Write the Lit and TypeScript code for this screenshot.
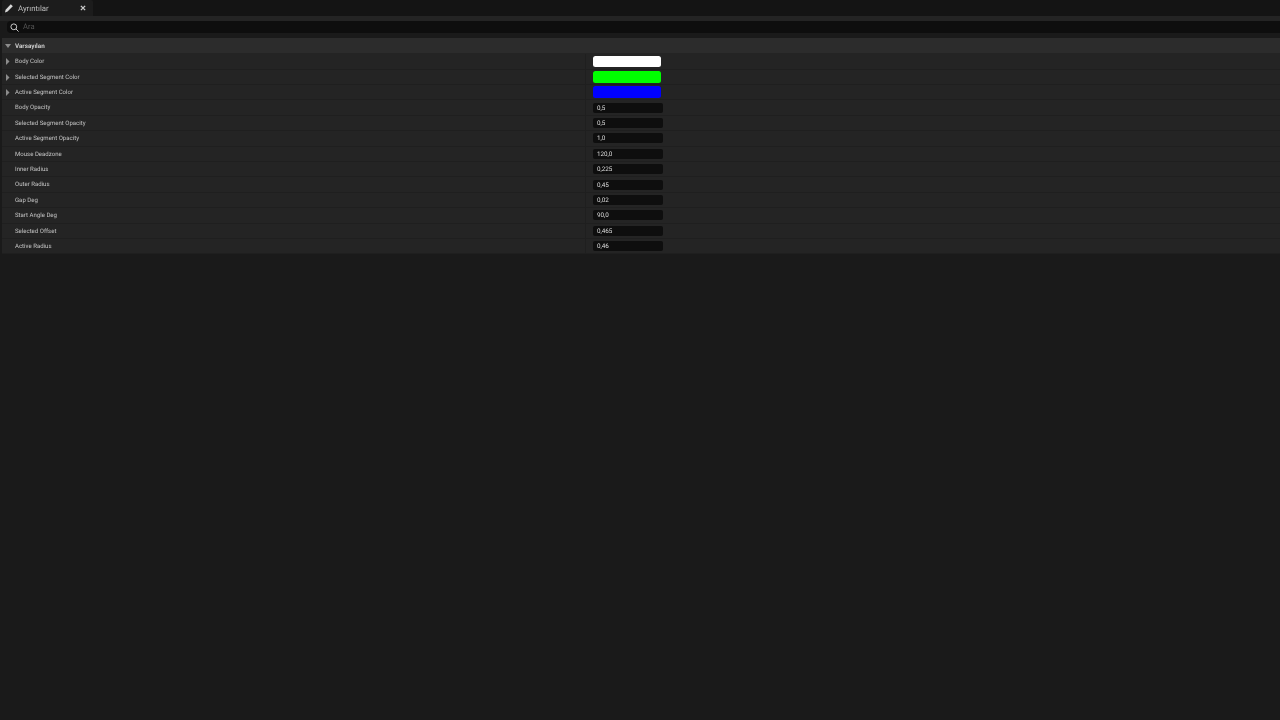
import { LitElement, html, css } from "lit";
import { customElement } from "lit/decorators.js";

type Row = { label: string; color?: string; value?: string };
const rows: Row[] = [
  { label: "Body Color", color: "#ffffff" },
  { label: "Selected Segment Color", color: "#00ff00" },
  { label: "Active Segment Color", color: "#0000ff" },
  { label: "Body Opacity", value: "0,5" },
  { label: "Selected Segment Opacity", value: "0,5" },
  { label: "Active Segment Opacity", value: "1,0" },
  { label: "Mouse Deadzone", value: "120,0" },
  { label: "Inner Radius", value: "0,225" },
  { label: "Outer Radius", value: "0,45" },
  { label: "Gap Deg", value: "0,02" },
  { label: "Start Angle Deg", value: "90,0" },
  { label: "Selected Offset", value: "0,465" },
  { label: "Active Radius", value: "0,46" },
];

@customElement("app-root")
export class AppRoot extends LitElement {
  static styles = css`
    :host { display: block; width: 1280px; height: 720px; overflow: hidden; background: #1a1a1a; }
    .page { display: flex; flex-direction: column; width: 1280px; height: 720px; background: #1a1a1a; font-family: Roboto, "Liberation Sans", sans-serif; color: #c0c0c0; text-rendering: geometricPrecision; filter: blur(0.3px); }
    .tabbar { display: flex; height: 16px; background: #141414; flex: none; }
    .tab { display: flex; align-items: center; width: 91px; margin-left: 2px; background: #1c1c1c; border-radius: 2px 2px 0 0; box-sizing: border-box; padding-left: 2px; }
    .tab svg { width: 10px; height: 10px; flex: none; }
    .tabtitle { font-size: 7.8px; margin-left: 4px; color: #bdbdbd; flex: 1; }
    .close { width: 8px; height: 8px; margin-right: 5px; flex: none; }
    .band { height: 5px; background: #242424; flex: none; }
    .search { display: flex; align-items: center; height: 12px; background: #0e0e0e; border-radius: 4px 0 0 4px; margin-left: 7px; flex: none; padding-left: 3px; }
    .search svg { width: 9px; height: 9px; flex: none; }
    .search span { font-size: 7.6px; color: #555; margin-left: 4px; margin-bottom: 1px; }
    .gap { height: 5px; background: #1a1a1a; flex: none; }
    .section { display: flex; align-items: center; height: 15px; background: #2c2c2c; flex: none; margin-left: 2px; }
    .section svg { width: 6px; height: 6px; margin-left: 3px; flex: none; }
    .section span { font-size: 6.3px; font-weight: 700; color: #cccccc; margin-left: 4px; }
    .list { margin-left: 2px; padding-top: 1.1px; flex: none; background: #242424; }
    .row { display: grid; grid-template-columns: 584px 1fr; height: 15.42px; box-sizing: border-box; background: #242424; border-bottom: 1px solid #1f1f1f; }
    .name { display: flex; align-items: center; font-size: 6.05px; color: #c4c4c4; padding: 0.6px 0 0 13px; position: relative; border-right: 1px solid #1f1f1f; }
    .name svg { position: absolute; left: 3px; top: 4px; width: 5px; height: 7px; }
    .val { display: flex; align-items: center; padding-left: 7px; }
    .swatch { width: 68px; height: 11.6px; border-radius: 2.5px; }
    .num { width: 70px; height: 10px; background: #0e0e0e; border-radius: 2px; box-sizing: border-box; padding-left: 4px; font-size: 6.3px; line-height: 10px; color: #dddddd; }
  `;

  render() {
    return html`
      <div class="page">
        <div class="tabbar">
          <div class="tab">
            <svg viewBox="0 0 10 10"><path d="M1 9.4l.6-2.6L6.8 1.2l2 2-5.2 5.4z" fill="#d8d8d8"/></svg>
            <span class="tabtitle">Ayrıntılar</span>
            <svg class="close" viewBox="0 0 8 8"><path d="M2.3 2.3l3.4 3.4M5.7 2.3L2.3 5.7" stroke="#c8c8c8" stroke-width="1.1"/></svg>
          </div>
        </div>
        <div class="band"></div>
        <div class="search">
          <svg viewBox="0 0 9 9"><circle cx="3.8" cy="3.8" r="2.9" fill="none" stroke="#c8c8c8"/><path d="M6 6L8.6 8.6" stroke="#c8c8c8"/></svg>
          <span>Ara</span>
        </div>
        <div class="gap"></div>
        <div class="section">
          <svg viewBox="0 0 6 6"><path d="M0 1h6L3 5z" fill="#8c8c8c"/></svg>
          <span>Varsayılan</span>
        </div>
        <div class="list">
          ${rows.map(r => html`
            <div class="row">
              <div class="name">
                ${r.color ? html`<svg viewBox="0 0 5 7"><path d="M1 0l3.5 3.5L1 7z" fill="#8c8c8c"/></svg>` : ""}
                ${r.label}
              </div>
              <div class="val">
                ${r.color
                  ? html`<div class="swatch" style="background:${r.color}"></div>`
                  : html`<div class="num">${r.value}</div>`}
              </div>
            </div>`)}
        </div>
      </div>
    `;
  }
}
